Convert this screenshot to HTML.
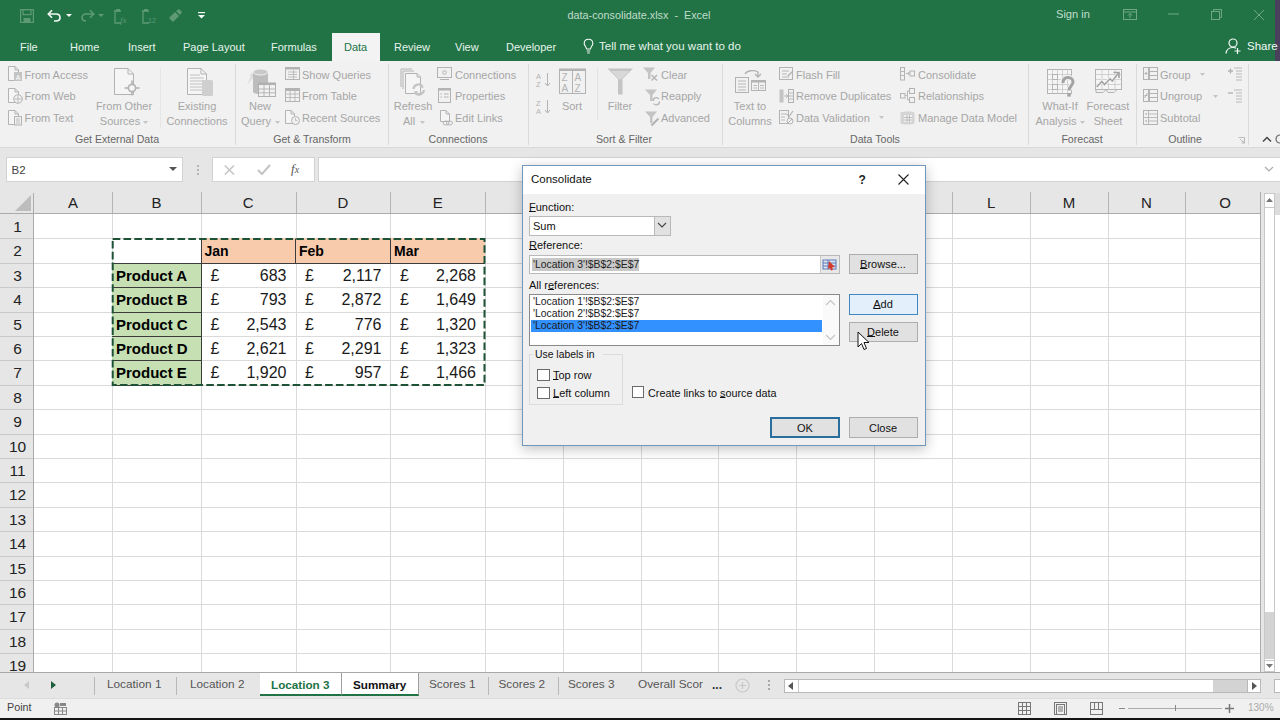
<!DOCTYPE html><html><head><meta charset="utf-8"><style>
html,body{margin:0;padding:0;}
body{width:1280px;height:720px;overflow:hidden;position:relative;background:#fff;font-family:"Liberation Sans",sans-serif;}
.t{position:absolute;white-space:nowrap;line-height:1;}
.r{position:absolute;box-sizing:border-box;}
svg.r{overflow:visible;}
u{text-decoration:underline;text-underline-offset:0px;text-decoration-thickness:1px;}
</style></head><body>
<div class="r" style="left:0px;top:0px;width:1280px;height:61px;background:#217346"></div>
<div class="r" style="left:1275px;top:0px;width:5px;height:61px;background:#4a3f5c"></div>
<div class="r" style="left:332px;top:33px;width:48px;height:28px;background:#f3f3f3"></div>
<div class="t" style="top:41.79px;font-size:11px;color:#e6f4eb;left:20px;">File</div>
<div class="t" style="top:41.79px;font-size:11px;color:#e6f4eb;left:70px;">Home</div>
<div class="t" style="top:41.79px;font-size:11px;color:#e6f4eb;left:128px;">Insert</div>
<div class="t" style="top:41.79px;font-size:11px;color:#e6f4eb;left:183px;">Page Layout</div>
<div class="t" style="top:41.79px;font-size:11px;color:#e6f4eb;left:271px;">Formulas</div>
<div class="t" style="top:41.79px;font-size:11px;color:#217346;left:344px;">Data</div>
<div class="t" style="top:41.79px;font-size:11px;color:#e6f4eb;left:394px;">Review</div>
<div class="t" style="top:41.79px;font-size:11px;color:#e6f4eb;left:455px;">View</div>
<div class="t" style="top:41.79px;font-size:11px;color:#e6f4eb;left:506px;">Developer</div>
<div class="t" style="top:41.37px;font-size:11.5px;color:#e6f4eb;left:599px;">Tell me what you want to do</div>
<svg class="r" style="left:583px;top:38px;" width="11" height="17" viewBox="0 0 11 17"><path d="M5.5 1.2C3 1.2 1.2 3 1.2 5.4C1.2 7.6 3.3 8.6 3.6 11H7.4C7.7 8.6 9.8 7.6 9.8 5.4C9.8 3 8 1.2 5.5 1.2Z" fill="none" stroke="#f4f9f6" stroke-width="1.1"/><path d="M3.8 13H7.2M4.3 15H6.7" stroke="#f4f9f6" stroke-width="1.1"/></svg>
<div class="t" style="top:9.61px;font-size:10.8px;color:#c0ddca;left:489px;width:300px;text-align:center;">data-consolidate.xlsx&nbsp; -&nbsp; Excel</div>
<div class="t" style="top:9.35px;font-size:11.1px;color:#c0ddca;left:1056px;">Sign in</div>
<div class="t" style="top:40.87px;font-size:11.5px;color:#f4f9f6;left:1247px;">Share</div>
<svg class="r" style="left:1225px;top:38px;" width="17" height="16" viewBox="0 0 17 16"><circle cx="8" cy="5" r="4" fill="none" stroke="#f4f9f6" stroke-width="1.2"/><path d="M1 15.5C1.5 11.5 4 9.5 8 9.5C9.2 9.5 10.2 9.7 11 10.1" fill="none" stroke="#f4f9f6" stroke-width="1.2"/><path d="M12.5 10V16M9.5 13H15.5" stroke="#f4f9f6" stroke-width="1.2"/></svg>
<svg class="r" style="left:20px;top:9px;" width="14" height="14" viewBox="0 0 14 14"><rect x="0.6" y="0.6" width="12.8" height="12.8" fill="none" stroke="#5e9a76" stroke-width="1.2"/><rect x="3" y="0.6" width="8" height="5" fill="none" stroke="#5e9a76" stroke-width="1.2"/><rect x="3.5" y="9" width="7" height="4.4" fill="#5e9a76"/></svg>
<svg class="r" style="left:47px;top:9px;" width="15" height="13" viewBox="0 0 15 13"><path d="M1.5 5H9C11.5 5 13 6.5 13 8.5C13 10.5 11.5 12 9 12H7" fill="none" stroke="#f4f9f6" stroke-width="1.6"/><path d="M5 1.2L1.3 5L5 8.8" fill="none" stroke="#f4f9f6" stroke-width="1.6"/></svg>
<svg class="r" style="left:66px;top:14px;" width="6" height="3" viewBox="0 0 6 3"><path d="M0 0H6L3 3Z" fill="#f4f9f6"/></svg>
<svg class="r" style="left:80px;top:9px;" width="15" height="13" viewBox="0 0 15 13"><path d="M13.5 5H6C3.5 5 2 6.5 2 8.5C2 10.5 3.5 12 6 12" fill="none" stroke="#5e9a76" stroke-width="1.6"/><path d="M10 1.2L13.7 5L10 8.8" fill="none" stroke="#5e9a76" stroke-width="1.6"/></svg>
<svg class="r" style="left:98px;top:14px;" width="6" height="3" viewBox="0 0 6 3"><path d="M0 0H6L3 3Z" fill="#5e9a76"/></svg>
<svg class="r" style="left:112px;top:8px;" width="16" height="16" viewBox="0 0 16 16"><path d="M2 3H9M3 3V15H9" fill="none" stroke="#5e9a76" stroke-width="1.3"/><rect x="4" y="1" width="4" height="2.5" fill="#5e9a76"/><text x="8" y="15" font-size="9" font-style="italic" fill="#5e9a76" font-family="Liberation Serif">fx</text></svg>
<svg class="r" style="left:140px;top:8px;" width="16" height="16" viewBox="0 0 16 16"><path d="M2 3H9M3 3V15H9" fill="none" stroke="#5e9a76" stroke-width="1.3"/><rect x="4" y="1" width="4" height="2.5" fill="#5e9a76"/><text x="8" y="15" font-size="7" fill="#5e9a76" font-family="Liberation Sans">12</text></svg>
<svg class="r" style="left:167px;top:9px;" width="16" height="14" viewBox="0 0 16 14"><path d="M2 9L8 3L12 7L6 13Z" fill="#5e9a76"/><path d="M9 2L13 6L15 3L12 0Z" fill="#5e9a76"/></svg>
<svg class="r" style="left:198px;top:12px;" width="7" height="7" viewBox="0 0 7 7"><path d="M0 0.6H7" stroke="#f4f9f6" stroke-width="1.2"/><path d="M0 3H7L3.5 6.5Z" fill="#f4f9f6"/></svg>
<svg class="r" style="left:1123px;top:9px;" width="14" height="11" viewBox="0 0 14 11"><rect x="0.5" y="0.5" width="13" height="10" fill="none" stroke="#6fa886"/><path d="M0.5 3H13.5M7 9V4.5M5 6.5L7 4.5L9 6.5" fill="none" stroke="#6fa886"/></svg>
<svg class="r" style="left:1168px;top:13px;" width="11" height="2" viewBox="0 0 11 2"><path d="M0 1H11" stroke="#6fa886" stroke-width="1"/></svg>
<svg class="r" style="left:1211px;top:9px;" width="11" height="11" viewBox="0 0 11 11"><rect x="0.5" y="2.5" width="8" height="8" fill="none" stroke="#6fa886"/><path d="M2.5 2.5V0.5H10.5V8.5H8.5" fill="none" stroke="#6fa886"/></svg>
<svg class="r" style="left:1254px;top:10px;" width="10" height="10" viewBox="0 0 10 10"><path d="M0 0L10 10M10 0L0 10" stroke="#6fa886" stroke-width="1"/></svg>
<div class="r" style="left:0px;top:61px;width:1280px;height:87px;background:#f1f1f1;border-bottom:1px solid #d9d9d9"></div>
<div class="t" style="top:134.03px;font-size:10.6px;color:#666666;left:-33px;width:300px;text-align:center;">Get External Data</div>
<div class="t" style="top:134.03px;font-size:10.6px;color:#666666;left:162px;width:300px;text-align:center;">Get &amp; Transform</div>
<div class="t" style="top:134.03px;font-size:10.6px;color:#666666;left:308px;width:300px;text-align:center;">Connections</div>
<div class="t" style="top:134.03px;font-size:10.6px;color:#666666;left:474px;width:300px;text-align:center;">Sort &amp; Filter</div>
<div class="t" style="top:134.03px;font-size:10.6px;color:#666666;left:725px;width:300px;text-align:center;">Data Tools</div>
<div class="t" style="top:134.03px;font-size:10.6px;color:#666666;left:932px;width:300px;text-align:center;">Forecast</div>
<div class="t" style="top:134.03px;font-size:10.6px;color:#666666;left:1035px;width:300px;text-align:center;">Outline</div>
<div class="r" style="left:235px;top:64px;width:1px;height:81px;background:#dadada"></div>
<div class="r" style="left:388px;top:64px;width:1px;height:81px;background:#dadada"></div>
<div class="r" style="left:528px;top:64px;width:1px;height:81px;background:#dadada"></div>
<div class="r" style="left:722px;top:64px;width:1px;height:81px;background:#dadada"></div>
<div class="r" style="left:1028px;top:64px;width:1px;height:81px;background:#dadada"></div>
<div class="r" style="left:1136px;top:64px;width:1px;height:81px;background:#dadada"></div>
<div class="r" style="left:1248px;top:64px;width:1px;height:81px;background:#dadada"></div>
<div class="r" style="left:160px;top:68px;width:1px;height:60px;background:#e6e6e6"></div>
<div class="r" style="left:597px;top:68px;width:1px;height:52px;background:#e2e2e2"></div>
<div class="t" style="top:69.99px;font-size:11px;color:#a6a6a6;left:24.5px;">From Access</div>
<div class="t" style="top:91.29px;font-size:11px;color:#a6a6a6;left:24.5px;">From Web</div>
<div class="t" style="top:112.89px;font-size:11px;color:#a6a6a6;left:24.5px;">From Text</div>
<div class="t" style="top:69.99px;font-size:11px;color:#a6a6a6;left:302px;">Show Queries</div>
<div class="t" style="top:91.29px;font-size:11px;color:#a6a6a6;left:302px;">From Table</div>
<div class="t" style="top:112.89px;font-size:11px;color:#a6a6a6;left:302px;">Recent Sources</div>
<div class="t" style="top:69.99px;font-size:11px;color:#a6a6a6;left:455px;">Connections</div>
<div class="t" style="top:91.29px;font-size:11px;color:#a6a6a6;left:455px;">Properties</div>
<div class="t" style="top:112.89px;font-size:11px;color:#a6a6a6;left:455px;">Edit Links</div>
<div class="t" style="top:69.99px;font-size:11px;color:#a6a6a6;left:661px;">Clear</div>
<div class="t" style="top:91.29px;font-size:11px;color:#a6a6a6;left:661px;">Reapply</div>
<div class="t" style="top:112.89px;font-size:11px;color:#a6a6a6;left:661px;">Advanced</div>
<div class="t" style="top:69.99px;font-size:11px;color:#a6a6a6;left:796px;">Flash Fill</div>
<div class="t" style="top:91.29px;font-size:11px;color:#a6a6a6;left:796px;">Remove Duplicates</div>
<div class="t" style="top:112.89px;font-size:11px;color:#a6a6a6;left:796px;">Data Validation</div>
<div class="t" style="top:69.99px;font-size:11px;color:#a6a6a6;left:918px;">Consolidate</div>
<div class="t" style="top:91.29px;font-size:11px;color:#a6a6a6;left:918px;">Relationships</div>
<div class="t" style="top:112.89px;font-size:11px;color:#a6a6a6;left:918px;">Manage Data Model</div>
<div class="t" style="top:69.99px;font-size:11px;color:#a6a6a6;left:1160px;">Group</div>
<div class="t" style="top:91.29px;font-size:11px;color:#a6a6a6;left:1160px;">Ungroup</div>
<div class="t" style="top:112.89px;font-size:11px;color:#a6a6a6;left:1160px;">Subtotal</div>
<svg class="r" style="left:879px;top:116px;" width="6" height="3" viewBox="0 0 6 3"><path d="M0 0H5L2.5 3Z" fill="#c4c4c4"/></svg>
<svg class="r" style="left:1200px;top:73px;" width="6" height="3" viewBox="0 0 6 3"><path d="M0 0H5L2.5 3Z" fill="#c4c4c4"/></svg>
<svg class="r" style="left:1213px;top:95px;" width="6" height="3" viewBox="0 0 6 3"><path d="M0 0H5L2.5 3Z" fill="#c4c4c4"/></svg>
<div class="t" style="top:101.09px;font-size:11px;color:#a6a6a6;left:-26px;width:300px;text-align:center;">From Other</div>
<div class="t" style="top:116.09px;font-size:11px;color:#a6a6a6;left:-30px;width:300px;text-align:center;">Sources</div>
<div class="t" style="top:101.09px;font-size:11px;color:#a6a6a6;left:47px;width:300px;text-align:center;">Existing</div>
<div class="t" style="top:116.09px;font-size:11px;color:#a6a6a6;left:47px;width:300px;text-align:center;">Connections</div>
<div class="t" style="top:101.09px;font-size:11px;color:#a6a6a6;left:110px;width:300px;text-align:center;">New</div>
<div class="t" style="top:116.09px;font-size:11px;color:#a6a6a6;left:106px;width:300px;text-align:center;">Query</div>
<div class="t" style="top:101.09px;font-size:11px;color:#a6a6a6;left:263px;width:300px;text-align:center;">Refresh</div>
<div class="t" style="top:116.09px;font-size:11px;color:#a6a6a6;left:259px;width:300px;text-align:center;">All</div>
<div class="t" style="top:101.09px;font-size:11px;color:#a6a6a6;left:422px;width:300px;text-align:center;">Sort</div>
<div class="t" style="top:101.09px;font-size:11px;color:#a6a6a6;left:470px;width:300px;text-align:center;">Filter</div>
<div class="t" style="top:101.09px;font-size:11px;color:#a6a6a6;left:600px;width:300px;text-align:center;">Text to</div>
<div class="t" style="top:116.09px;font-size:11px;color:#a6a6a6;left:600px;width:300px;text-align:center;">Columns</div>
<div class="t" style="top:101.09px;font-size:11px;color:#a6a6a6;left:910px;width:300px;text-align:center;">What-If</div>
<div class="t" style="top:116.09px;font-size:11px;color:#a6a6a6;left:906px;width:300px;text-align:center;">Analysis</div>
<div class="t" style="top:101.09px;font-size:11px;color:#a6a6a6;left:958px;width:300px;text-align:center;">Forecast</div>
<div class="t" style="top:116.09px;font-size:11px;color:#a6a6a6;left:958px;width:300px;text-align:center;">Sheet</div>
<svg class="r" style="left:143px;top:121px;" width="6" height="3" viewBox="0 0 6 3"><path d="M0 0H5L2.5 3Z" fill="#c4c4c4"/></svg>
<svg class="r" style="left:275px;top:121px;" width="6" height="3" viewBox="0 0 6 3"><path d="M0 0H5L2.5 3Z" fill="#c4c4c4"/></svg>
<svg class="r" style="left:420px;top:121px;" width="6" height="3" viewBox="0 0 6 3"><path d="M0 0H5L2.5 3Z" fill="#c4c4c4"/></svg>
<svg class="r" style="left:1080px;top:121px;" width="6" height="3" viewBox="0 0 6 3"><path d="M0 0H5L2.5 3Z" fill="#c4c4c4"/></svg>
<svg class="r" style="left:8px;top:66px;" width="15" height="16" viewBox="0 0 15 16"><path d="M0.5 0.5H7L10.5 4V14.5H0.5Z" fill="#f5f5f5" stroke="#b3b3b3" stroke-width="1"/><path d="M7 0.5V4H10.5" fill="none" stroke="#b3b3b3" stroke-width="1"/><rect x="6" y="6" width="8" height="9" fill="#c4c4c4"/><text x="7.5" y="14" font-size="7" fill="#f1f1f1" font-family="Liberation Sans" font-weight="bold">A</text></svg>
<svg class="r" style="left:8px;top:88px;" width="15" height="16" viewBox="0 0 15 16"><path d="M0.5 0.5H7L10.5 4V14.5H0.5Z" fill="#f5f5f5" stroke="#b3b3b3" stroke-width="1"/><path d="M7 0.5V4H10.5" fill="none" stroke="#b3b3b3" stroke-width="1"/><circle cx="10" cy="11" r="4.3" fill="#f1f1f1" stroke="#b3b3b3"/><path d="M6 11H14M10 7V15" stroke="#b3b3b3" stroke-width="0.8"/></svg>
<svg class="r" style="left:8px;top:110px;" width="15" height="16" viewBox="0 0 15 16"><path d="M0.5 0.5H7L10.5 4V14.5H0.5Z" fill="#f5f5f5" stroke="#b3b3b3" stroke-width="1"/><path d="M7 0.5V4H10.5" fill="none" stroke="#b3b3b3" stroke-width="1"/><rect x="6.5" y="6.5" width="7" height="8.5" fill="#f1f1f1" stroke="#b3b3b3"/><path d="M8 9H12M8 11H12M8 13H12" stroke="#b3b3b3" stroke-width="0.8"/></svg>
<svg class="r" style="left:114px;top:68px;" width="27" height="28" viewBox="0 0 27 28"><path d="M0.5 0.5H14L19.5 6V26.5H0.5Z" fill="#f5f5f5" stroke="#b3b3b3" stroke-width="1"/><path d="M14 0.5V6H19.5" fill="none" stroke="#b3b3b3" stroke-width="1"/><circle cx="18" cy="20" r="3.6" fill="#f5f5f5" stroke="#b3b3b3" stroke-width="1.7"/><path d="M18 12.5V16M18 24V27.5M10.5 20H14M22 20H25.5" stroke="#b3b3b3" stroke-width="1.6"/></svg>
<svg class="r" style="left:187px;top:68px;" width="28" height="28" viewBox="0 0 28 28"><path d="M0.5 0.5H14L19.5 6V26.5H0.5Z" fill="#f5f5f5" stroke="#b3b3b3" stroke-width="1"/><path d="M14 0.5V6H19.5" fill="none" stroke="#b3b3b3" stroke-width="1"/><path d="M3 7H13M3 10H17M3 13H17M3 16H17M3 19H17M3 22H17" stroke="#b3b3b3" stroke-width="0.8"/><rect x="15" y="12" width="11" height="16" rx="1.5" fill="#cfcfcf"/></svg>
<svg class="r" style="left:245px;top:66px;" width="32" height="32" viewBox="0 0 32 32"><path d="M13 1L9 8L11 8L2 19L6 10L4 10Z" fill="#dcdcdc"/><rect x="8" y="6" width="15" height="20" fill="#bdbdbd"/><ellipse cx="15.5" cy="26" rx="7.5" ry="2" fill="#bdbdbd"/><ellipse cx="15.5" cy="6" rx="7.5" ry="3" fill="#c9c9c9" stroke="#f1f1f1" stroke-width="1"/><rect x="13.5" y="17" width="17" height="13.5" fill="#f1f1f1" stroke="#b0b0b0"/><rect x="13.5" y="17" width="17" height="2" fill="#b0b0b0"/><path d="M13.5 23H30.5M13.5 26.8H30.5M19 19V30.5M24.5 19V30.5" stroke="#b0b0b0" stroke-width="0.9"/></svg>
<svg class="r" style="left:285px;top:67px;" width="15" height="13" viewBox="0 0 15 13"><rect x="0.5" y="0.5" width="14" height="12" fill="none" stroke="#b3b3b3" stroke-width="1"/><rect x="0.5" y="0.5" width="14" height="2" fill="#b3b3b3"/><path d="M3 5H12M3 7.5H8M9 7.5H12M3 10H8M9 10H12M8.5 3V12" stroke="#b3b3b3" stroke-width="0.8"/></svg>
<svg class="r" style="left:285px;top:88px;" width="15" height="14" viewBox="0 0 15 14"><rect x="0.5" y="0.5" width="14" height="13" fill="none" stroke="#b3b3b3" stroke-width="1"/><rect x="0.5" y="0.5" width="14" height="2.5" fill="#b3b3b3"/><path d="M0.5 6H14.5M0.5 9.5H14.5M5 3V13.5M10 3V13.5" stroke="#b3b3b3" stroke-width="0.8"/></svg>
<svg class="r" style="left:285px;top:110px;" width="15" height="16" viewBox="0 0 15 16"><path d="M0.5 0.5H6L9.5 4V13.5H0.5Z" fill="#f5f5f5" stroke="#b3b3b3" stroke-width="1"/><path d="M6 0.5V4H9.5" fill="none" stroke="#b3b3b3" stroke-width="1"/><circle cx="10.5" cy="10.5" r="4" fill="#f1f1f1" stroke="#b3b3b3"/><path d="M10.5 8V10.5H12.5" stroke="#b3b3b3" stroke-width="0.8" fill="none"/></svg>
<svg class="r" style="left:400px;top:68px;" width="30" height="30" viewBox="0 0 30 30"><path d="M1 19V1H12" fill="none" stroke="#b3b3b3" stroke-width="1"/><path d="M3 21V3H14" fill="none" stroke="#b3b3b3" stroke-width="1"/><g transform="translate(5,5)"><path d="M0.5 0.5H12L15.5 4V20.5H0.5Z" fill="#f5f5f5" stroke="#b3b3b3" stroke-width="1"/><path d="M12 0.5V4H15.5" fill="none" stroke="#b3b3b3" stroke-width="1"/></g><path d="M13.5 21A5 5 0 0 1 22.5 18.5M24 22A5 5 0 0 1 15 24.5" fill="none" stroke="#c4c4c4" stroke-width="2.2"/><path d="M21 16L24 19.5L19.5 20Z M16.5 27L13.5 23.5L18 23Z" fill="#c4c4c4"/></svg>
<svg class="r" style="left:437px;top:67px;" width="15" height="13" viewBox="0 0 15 13"><rect x="0.5" y="0.5" width="14" height="10" fill="none" stroke="#b3b3b3" stroke-width="1"/><path d="M3 12.5H12" stroke="#b3b3b3"/><circle cx="7.5" cy="5.5" r="1.8" fill="none" stroke="#b3b3b3" stroke-width="1"/></svg>
<svg class="r" style="left:438px;top:88px;" width="13" height="15" viewBox="0 0 13 15"><rect x="0.5" y="0.5" width="12" height="14" fill="none" stroke="#b3b3b3" stroke-width="1"/><rect x="0.5" y="0.5" width="12" height="2" fill="#b3b3b3"/><path d="M2.5 6H4M6 6H10.5M2.5 9H4M6 9H10.5" stroke="#b3b3b3"/></svg>
<svg class="r" style="left:440px;top:110px;" width="13" height="16" viewBox="0 0 13 16"><path d="M0.5 0.5H6L9.5 4V11.5H0.5Z" fill="#f5f5f5" stroke="#b3b3b3" stroke-width="1"/><path d="M6 0.5V4H9.5" fill="none" stroke="#b3b3b3" stroke-width="1"/><ellipse cx="6" cy="13" rx="3" ry="2" fill="none" stroke="#b3b3b3" stroke-width="1" stroke-width="1.2"/><ellipse cx="9.5" cy="13" rx="3" ry="2" fill="none" stroke="#b3b3b3" stroke-width="1" stroke-width="1.2"/></svg>
<svg class="r" style="left:536px;top:72px;" width="16" height="16" viewBox="0 0 16 16"><text x="0" y="7" font-size="7.5" fill="#b3b3b3" font-family="Liberation Sans">A</text><text x="0" y="15" font-size="7.5" fill="#b3b3b3" font-family="Liberation Sans">Z</text><path d="M11.5 1V14M9 11L11.5 14L14 11" fill="none" stroke="#b3b3b3" stroke-width="1" stroke-width="1.2"/></svg>
<svg class="r" style="left:536px;top:99px;" width="16" height="16" viewBox="0 0 16 16"><text x="0" y="7" font-size="7.5" fill="#b3b3b3" font-family="Liberation Sans">Z</text><text x="0" y="15" font-size="7.5" fill="#b3b3b3" font-family="Liberation Sans">A</text><path d="M11.5 1V14M9 11L11.5 14L14 11" fill="none" stroke="#b3b3b3" stroke-width="1" stroke-width="1.2"/></svg>
<svg class="r" style="left:559px;top:68px;" width="28" height="26" viewBox="0 0 28 26"><rect x="0.5" y="2.5" width="13" height="23" fill="none" stroke="#b3b3b3" stroke-width="1"/><rect x="13.5" y="2.5" width="13" height="23" fill="none" stroke="#b3b3b3" stroke-width="1"/><rect x="0" y="0.5" width="27" height="2.5" fill="#b3b3b3"/><text x="2.5" y="13" font-size="10" fill="#b3b3b3" font-family="Liberation Sans">Z</text><text x="2.5" y="24" font-size="10" fill="#b3b3b3" font-family="Liberation Sans">A</text><text x="15.5" y="13" font-size="10" fill="#b3b3b3" font-family="Liberation Sans">A</text><text x="15.5" y="24" font-size="10" fill="#b3b3b3" font-family="Liberation Sans">Z</text></svg>
<svg class="r" style="left:607px;top:68px;" width="27" height="27" viewBox="0 0 27 27"><path d="M0.5 0.5H26L15.5 11V26.5H11V11Z" fill="#c4c4c4"/><path d="M4 3H22.5L14 11.5H12.5Z" fill="#d8d8d8"/></svg>
<svg class="r" style="left:643px;top:67px;" width="16" height="15" viewBox="0 0 16 15"><path d="M0 0.5H12L7.5 6V12H5V6Z" fill="#c4c4c4"/><path d="M8.5 8L14 13.5M14 8L8.5 13.5" stroke="#b3b3b3" stroke-width="1.4"/></svg>
<svg class="r" style="left:645px;top:89px;" width="16" height="16" viewBox="0 0 16 16"><path d="M0 0.5H12L7.5 6V12H5V6Z" fill="#c4c4c4"/><path d="M8 12A3.3 3.3 0 0 1 14 10M14.5 12.5A3.3 3.3 0 0 1 8.5 14.5" fill="none" stroke="#b3b3b3" stroke-width="1.3"/></svg>
<svg class="r" style="left:645px;top:111px;" width="16" height="16" viewBox="0 0 16 16"><path d="M0 0.5H12L7.5 6V12H5V6Z" fill="#c4c4c4"/><path d="M6.5 14.5L13.5 7.5" stroke="#b3b3b3" stroke-width="2.2"/></svg>
<svg class="r" style="left:735px;top:68px;" width="32" height="26" viewBox="0 0 32 26"><rect x="0.5" y="9.5" width="13" height="15" fill="#f1f1f1" stroke="#b3b3b3"/><path d="M3 13H11M3 16H11M3 19H11M3 22H11" stroke="#b3b3b3" stroke-width="0.9"/><rect x="16.5" y="12.5" width="14" height="10" fill="#f1f1f1" stroke="#b3b3b3"/><rect x="16.5" y="12.5" width="14" height="2" fill="#b3b3b3"/><path d="M23.5 14V22.5M18.5 17.5H22M25 17.5H29M18.5 20H22M25 20H29" stroke="#b3b3b3" stroke-width="0.9"/><path d="M10 6A8 5 0 0 1 23 4V8" fill="none" stroke="#b3b3b3" stroke-width="1.4"/><path d="M20 6L23 9L26 6" fill="none" stroke="#b3b3b3" stroke-width="1.4"/></svg>
<svg class="r" style="left:779px;top:67px;" width="15" height="14" viewBox="0 0 15 14"><rect x="0.5" y="0.5" width="13" height="12" fill="none" stroke="#b3b3b3" stroke-width="1"/><path d="M3 4H10M3 7H8M3 10H10" stroke="#b3b3b3" stroke-width="0.9"/><path d="M9 9L14 4" stroke="#b3b3b3" stroke-width="1.5"/></svg>
<svg class="r" style="left:779px;top:89px;" width="15" height="15" viewBox="0 0 15 15"><rect x="0.5" y="0.5" width="4" height="13" fill="#c4c4c4"/><rect x="9.5" y="0.5" width="5" height="13" fill="none" stroke="#b3b3b3" stroke-width="1"/><path d="M5 7H9M7 5L9 7L7 9M10 4H14M10 7H14M10 10H14" stroke="#b3b3b3" stroke-width="0.9" fill="none"/></svg>
<svg class="r" style="left:779px;top:110px;" width="15" height="15" viewBox="0 0 15 15"><rect x="0.5" y="0.5" width="9" height="13" fill="none" stroke="#b3b3b3" stroke-width="1"/><path d="M2 4H8M2 7H6M2 10H6" stroke="#b3b3b3" stroke-width="0.9"/><path d="M8 4L10 6.5L14 1" fill="none" stroke="#b3b3b3" stroke-width="1.2"/><circle cx="11" cy="11" r="3" fill="#f1f1f1" stroke="#b3b3b3"/><path d="M9 13L13 9" stroke="#b3b3b3"/></svg>
<svg class="r" style="left:900px;top:67px;" width="15" height="14" viewBox="0 0 15 14"><rect x="0.5" y="0.5" width="4" height="12.5" fill="none" stroke="#b3b3b3" stroke-width="1"/><path d="M0.5 4.5H4.5M0.5 8.5H4.5M6 6.5H9M8 5L9.5 6.5L8 8" stroke="#b3b3b3" fill="none" stroke-width="0.9"/><rect x="10" y="4" width="4.5" height="5" fill="none" stroke="#b3b3b3" stroke-width="1"/></svg>
<svg class="r" style="left:900px;top:88px;" width="15" height="15" viewBox="0 0 15 15"><rect x="0.5" y="5.5" width="4.5" height="4.5" fill="none" stroke="#b3b3b3" stroke-width="1"/><rect x="9.5" y="0.5" width="5" height="5" fill="none" stroke="#b3b3b3" stroke-width="1"/><rect x="9.5" y="9.5" width="5" height="5" fill="none" stroke="#b3b3b3" stroke-width="1"/><path d="M5 7.5H7.5V3H9.5M7.5 7.5V12H9.5" fill="none" stroke="#b3b3b3" stroke-width="0.9"/></svg>
<svg class="r" style="left:900px;top:110px;" width="15" height="15" viewBox="0 0 15 15"><path d="M0.5 3C0.5 1 14.5 1 14.5 3V13C14.5 15 0.5 15 0.5 13Z" fill="#d4d4d4"/><rect x="4" y="5" width="8" height="7" fill="#f1f1f1"/><path d="M4 7.5H12M4 10H12M7 5V12M9.5 5V12" stroke="#b3b3b3" stroke-width="0.8"/></svg>
<svg class="r" style="left:1047px;top:69px;" width="29" height="30" viewBox="0 0 29 30"><rect x="0.5" y="0.5" width="24" height="24" fill="#f5f5f5" stroke="#b3b3b3"/><path d="M0.5 5.5H24.5M0.5 10.5H24.5M0.5 15.5H24.5M0.5 20.5H24.5M5.5 0.5V24.5M10.5 0.5V24.5M15.5 0.5V24.5M20.5 0.5V24.5" stroke="#c8c8c8" stroke-width="0.8"/><rect x="5.5" y="5.5" width="5" height="5" fill="none" stroke="#b3b3b3"/><rect x="5.5" y="15.5" width="5" height="5" fill="none" stroke="#b3b3b3"/><path d="M16 14C16 10 18.5 8.5 21 8.5C24 8.5 26 10.5 26 13C26 16.5 22 17 22 21.5" fill="none" stroke="#f1f1f1" stroke-width="5"/><path d="M16 14C16 10 18.5 8.5 21 8.5C24 8.5 26 10.5 26 13C26 16.5 22 17 22 21.5" fill="none" stroke="#a3a3a3" stroke-width="3"/><rect x="20.3" y="24" width="3.4" height="3.6" fill="#a3a3a3"/></svg>
<svg class="r" style="left:1095px;top:69px;" width="28" height="28" viewBox="0 0 28 28"><rect x="0.5" y="0.5" width="26" height="20" fill="#f5f5f5" stroke="#b3b3b3"/><path d="M0.5 5.5H26.5M0.5 10.5H26.5M0.5 15.5H26.5M7 0.5V20.5M13.5 0.5V20.5M20 0.5V20.5" stroke="#c8c8c8" stroke-width="0.8"/><path d="M1.7 18L6.8 12.5L9.5 15.6L15 9.8L17.3 12.1L24 3.5" fill="none" stroke="#f5f5f5" stroke-width="3.2"/><path d="M1.7 18L6.8 12.5L9.5 15.6L15 9.8L17.3 12.1L24 3.5" fill="none" stroke="#a3a3a3" stroke-width="1.6"/><path d="M18.5 3.5H24V9" fill="none" stroke="#a3a3a3" stroke-width="1.6"/><path d="M1 20.5V23.5H8L11 20.5L13 23.5H19L22 20.5" fill="none" stroke="#b3b3b3"/></svg>
<svg class="r" style="left:1143px;top:67px;" width="16" height="14" viewBox="0 0 16 14"><rect x="0.5" y="0.5" width="5" height="12" fill="none" stroke="#b3b3b3" stroke-width="1"/><rect x="6.5" y="0.5" width="8" height="12" fill="none" stroke="#b3b3b3" stroke-width="1"/><path d="M6.5 4.5H14.5M6.5 8.5H14.5" stroke="#b3b3b3"/><path d="M1.5 6.5H4.5M3 5V8" stroke="#b3b3b3"/></svg>
<svg class="r" style="left:1143px;top:89px;" width="16" height="14" viewBox="0 0 16 14"><rect x="0.5" y="0.5" width="5" height="12" fill="none" stroke="#b3b3b3" stroke-width="1"/><rect x="6.5" y="0.5" width="8" height="12" fill="none" stroke="#b3b3b3" stroke-width="1"/><path d="M6.5 4.5H14.5M6.5 8.5H14.5" stroke="#b3b3b3"/><path d="M1.5 6.5H4.5M1.5 9L4.5 4" stroke="#b3b3b3"/></svg>
<svg class="r" style="left:1143px;top:110px;" width="16" height="16" viewBox="0 0 16 16"><rect x="0.5" y="0.5" width="14" height="14" fill="none" stroke="#b3b3b3" stroke-width="1"/><path d="M0.5 7.5H14.5M5.5 0.5V14.5M5.5 4H14.5M5.5 11H14.5M2.5 4H4M3.2 3V5M2.5 11H4M3.2 10V12" stroke="#b3b3b3" stroke-width="0.9"/></svg>
<svg class="r" style="left:1228px;top:67px;" width="15" height="14" viewBox="0 0 15 14"><path d="M0 4H5M2.5 1.5V6.5" stroke="#b3b3b3" stroke-width="1.4"/><path d="M6 1H14M8 4H14M8 7H14M8 10H14M8 13H14" stroke="#b3b3b3" stroke-width="0.9"/></svg>
<svg class="r" style="left:1228px;top:89px;" width="15" height="14" viewBox="0 0 15 14"><path d="M0 4H5" stroke="#b3b3b3" stroke-width="1.4"/><path d="M6 1H14M8 4H14M8 7H14M8 10H14M8 13H14" stroke="#b3b3b3" stroke-width="0.9"/></svg>
<svg class="r" style="left:1238px;top:137px;" width="7" height="7" viewBox="0 0 7 7"><path d="M0.5 0.5H6.5V6.5M2 2L6 6M3.5 6H6V3.5" fill="none" stroke="#b3b3b3" stroke-width="0.9"/></svg>
<svg class="r" style="left:1262px;top:136px;" width="10" height="6" viewBox="0 0 10 6"><path d="M1 5.5L5 1.5L9 5.5" fill="none" stroke="#444" stroke-width="1.5"/></svg>
<svg class="r" style="left:1275px;top:134px;" width="6" height="10" viewBox="0 0 6 10"><path d="M5 1A4 4 0 1 0 5 9" fill="none" stroke="#666" stroke-width="1.2"/></svg>
<div class="r" style="left:0px;top:148px;width:1280px;height:44px;background:#e6e6e6"></div>
<div class="r" style="left:6px;top:157px;width:177px;height:25px;background:#fff;border:1px solid #d2d2d2"></div>
<div class="t" style="top:165.27px;font-size:11.5px;color:#444;left:11.5px;">B2</div>
<svg class="r" style="left:169px;top:167px;" width="8" height="4" viewBox="0 0 8 4"><path d="M0 0H8L4 4Z" fill="#555"/></svg>
<div class="r" style="left:197px;top:164.5px;width:2px;height:2px;background:#b5b5b5"></div>
<div class="r" style="left:197px;top:168.5px;width:2px;height:2px;background:#b5b5b5"></div>
<div class="r" style="left:197px;top:172.5px;width:2px;height:2px;background:#b5b5b5"></div>
<div class="r" style="left:212px;top:157px;width:103px;height:25px;background:#fff;border:1px solid #d2d2d2"></div>
<svg class="r" style="left:224px;top:165px;" width="11" height="10" viewBox="0 0 11 10"><path d="M0.8 0.5L10 9.5M10 0.5L0.8 9.5" stroke="#c4c4c4" stroke-width="1.5"/></svg>
<svg class="r" style="left:257px;top:164px;" width="14" height="11" viewBox="0 0 14 11"><path d="M1 6L5 10L13 1" fill="none" stroke="#c4c4c4" stroke-width="2"/></svg>
<div class="t" style="top:162.00px;font-size:13px;color:#555;left:291px;font-family:'Liberation Serif',serif;font-style:italic;">f<span style="font-size:10px">x</span></div>
<div class="r" style="left:318px;top:157px;width:962px;height:25px;background:#fff;border:1px solid #d2d2d2;border-right:none"></div>
<svg class="r" style="left:1264px;top:166px;" width="10" height="6" viewBox="0 0 10 6"><path d="M1 1L5 5L9 1" fill="none" stroke="#aaa" stroke-width="1.2"/></svg>
<div class="r" style="left:0px;top:192px;width:1261px;height:22px;background:#e6e6e6"></div>
<div class="r" style="left:0px;top:214px;width:34px;height:458px;background:#e6e6e6"></div>
<svg class="r" style="left:0;top:0" width="1280" height="720"><line x1="112.5" y1="214" x2="112.5" y2="672" stroke="#dadada" stroke-width="1"/><line x1="112.5" y1="192" x2="112.5" y2="214" stroke="#b4b4b4" stroke-width="1"/><line x1="201.5" y1="214" x2="201.5" y2="672" stroke="#dadada" stroke-width="1"/><line x1="201.5" y1="192" x2="201.5" y2="214" stroke="#b4b4b4" stroke-width="1"/><line x1="296.5" y1="214" x2="296.5" y2="672" stroke="#dadada" stroke-width="1"/><line x1="296.5" y1="192" x2="296.5" y2="214" stroke="#b4b4b4" stroke-width="1"/><line x1="390.5" y1="214" x2="390.5" y2="672" stroke="#dadada" stroke-width="1"/><line x1="390.5" y1="192" x2="390.5" y2="214" stroke="#b4b4b4" stroke-width="1"/><line x1="485.5" y1="214" x2="485.5" y2="672" stroke="#dadada" stroke-width="1"/><line x1="485.5" y1="192" x2="485.5" y2="214" stroke="#b4b4b4" stroke-width="1"/><line x1="563.5" y1="214" x2="563.5" y2="672" stroke="#dadada" stroke-width="1"/><line x1="563.5" y1="192" x2="563.5" y2="214" stroke="#b4b4b4" stroke-width="1"/><line x1="641.5" y1="214" x2="641.5" y2="672" stroke="#dadada" stroke-width="1"/><line x1="641.5" y1="192" x2="641.5" y2="214" stroke="#b4b4b4" stroke-width="1"/><line x1="718.5" y1="214" x2="718.5" y2="672" stroke="#dadada" stroke-width="1"/><line x1="718.5" y1="192" x2="718.5" y2="214" stroke="#b4b4b4" stroke-width="1"/><line x1="796.5" y1="214" x2="796.5" y2="672" stroke="#dadada" stroke-width="1"/><line x1="796.5" y1="192" x2="796.5" y2="214" stroke="#b4b4b4" stroke-width="1"/><line x1="874.5" y1="214" x2="874.5" y2="672" stroke="#dadada" stroke-width="1"/><line x1="874.5" y1="192" x2="874.5" y2="214" stroke="#b4b4b4" stroke-width="1"/><line x1="952.5" y1="214" x2="952.5" y2="672" stroke="#dadada" stroke-width="1"/><line x1="952.5" y1="192" x2="952.5" y2="214" stroke="#b4b4b4" stroke-width="1"/><line x1="1030.5" y1="214" x2="1030.5" y2="672" stroke="#dadada" stroke-width="1"/><line x1="1030.5" y1="192" x2="1030.5" y2="214" stroke="#b4b4b4" stroke-width="1"/><line x1="1108.5" y1="214" x2="1108.5" y2="672" stroke="#dadada" stroke-width="1"/><line x1="1108.5" y1="192" x2="1108.5" y2="214" stroke="#b4b4b4" stroke-width="1"/><line x1="1185.5" y1="214" x2="1185.5" y2="672" stroke="#dadada" stroke-width="1"/><line x1="1185.5" y1="192" x2="1185.5" y2="214" stroke="#b4b4b4" stroke-width="1"/><line x1="34" y1="238.5" x2="1261" y2="238.5" stroke="#dadada" stroke-width="1"/><line x1="0" y1="238.5" x2="34" y2="238.5" stroke="#c9c9c9" stroke-width="1"/><line x1="34" y1="263.5" x2="1261" y2="263.5" stroke="#dadada" stroke-width="1"/><line x1="0" y1="263.5" x2="34" y2="263.5" stroke="#c9c9c9" stroke-width="1"/><line x1="34" y1="287.5" x2="1261" y2="287.5" stroke="#dadada" stroke-width="1"/><line x1="0" y1="287.5" x2="34" y2="287.5" stroke="#c9c9c9" stroke-width="1"/><line x1="34" y1="312.5" x2="1261" y2="312.5" stroke="#dadada" stroke-width="1"/><line x1="0" y1="312.5" x2="34" y2="312.5" stroke="#c9c9c9" stroke-width="1"/><line x1="34" y1="336.5" x2="1261" y2="336.5" stroke="#dadada" stroke-width="1"/><line x1="0" y1="336.5" x2="34" y2="336.5" stroke="#c9c9c9" stroke-width="1"/><line x1="34" y1="360.5" x2="1261" y2="360.5" stroke="#dadada" stroke-width="1"/><line x1="0" y1="360.5" x2="34" y2="360.5" stroke="#c9c9c9" stroke-width="1"/><line x1="34" y1="385.5" x2="1261" y2="385.5" stroke="#dadada" stroke-width="1"/><line x1="0" y1="385.5" x2="34" y2="385.5" stroke="#c9c9c9" stroke-width="1"/><line x1="34" y1="409.5" x2="1261" y2="409.5" stroke="#dadada" stroke-width="1"/><line x1="0" y1="409.5" x2="34" y2="409.5" stroke="#c9c9c9" stroke-width="1"/><line x1="34" y1="434.5" x2="1261" y2="434.5" stroke="#dadada" stroke-width="1"/><line x1="0" y1="434.5" x2="34" y2="434.5" stroke="#c9c9c9" stroke-width="1"/><line x1="34" y1="458.5" x2="1261" y2="458.5" stroke="#dadada" stroke-width="1"/><line x1="0" y1="458.5" x2="34" y2="458.5" stroke="#c9c9c9" stroke-width="1"/><line x1="34" y1="482.5" x2="1261" y2="482.5" stroke="#dadada" stroke-width="1"/><line x1="0" y1="482.5" x2="34" y2="482.5" stroke="#c9c9c9" stroke-width="1"/><line x1="34" y1="507.5" x2="1261" y2="507.5" stroke="#dadada" stroke-width="1"/><line x1="0" y1="507.5" x2="34" y2="507.5" stroke="#c9c9c9" stroke-width="1"/><line x1="34" y1="531.5" x2="1261" y2="531.5" stroke="#dadada" stroke-width="1"/><line x1="0" y1="531.5" x2="34" y2="531.5" stroke="#c9c9c9" stroke-width="1"/><line x1="34" y1="556.5" x2="1261" y2="556.5" stroke="#dadada" stroke-width="1"/><line x1="0" y1="556.5" x2="34" y2="556.5" stroke="#c9c9c9" stroke-width="1"/><line x1="34" y1="580.5" x2="1261" y2="580.5" stroke="#dadada" stroke-width="1"/><line x1="0" y1="580.5" x2="34" y2="580.5" stroke="#c9c9c9" stroke-width="1"/><line x1="34" y1="604.5" x2="1261" y2="604.5" stroke="#dadada" stroke-width="1"/><line x1="0" y1="604.5" x2="34" y2="604.5" stroke="#c9c9c9" stroke-width="1"/><line x1="34" y1="629.5" x2="1261" y2="629.5" stroke="#dadada" stroke-width="1"/><line x1="0" y1="629.5" x2="34" y2="629.5" stroke="#c9c9c9" stroke-width="1"/><line x1="34" y1="653.5" x2="1261" y2="653.5" stroke="#dadada" stroke-width="1"/><line x1="0" y1="653.5" x2="34" y2="653.5" stroke="#c9c9c9" stroke-width="1"/><line x1="34" y1="678.5" x2="1261" y2="678.5" stroke="#dadada" stroke-width="1"/><line x1="0" y1="678.5" x2="34" y2="678.5" stroke="#c9c9c9" stroke-width="1"/><line x1="0" y1="213.5" x2="1261" y2="213.5" stroke="#ababab" stroke-width="1"/><line x1="33.5" y1="193" x2="33.5" y2="672" stroke="#ababab" stroke-width="1"/><line x1="1260.5" y1="192" x2="1260.5" y2="672" stroke="#ababab" stroke-width="1"/><path d="M15 211H31V195Z" fill="#bdbdbd"/></svg>
<div class="t" style="top:195.30px;font-size:15px;color:#222;left:-77.0px;width:300px;text-align:center;">A</div>
<div class="t" style="top:195.30px;font-size:15px;color:#222;left:6.5px;width:300px;text-align:center;">B</div>
<div class="t" style="top:195.30px;font-size:15px;color:#222;left:98.25px;width:300px;text-align:center;">C</div>
<div class="t" style="top:195.30px;font-size:15px;color:#222;left:193.0px;width:300px;text-align:center;">D</div>
<div class="t" style="top:195.30px;font-size:15px;color:#222;left:287.75px;width:300px;text-align:center;">E</div>
<div class="t" style="top:195.30px;font-size:15px;color:#222;left:841.25px;width:300px;text-align:center;">L</div>
<div class="t" style="top:195.30px;font-size:15px;color:#222;left:919.0px;width:300px;text-align:center;">M</div>
<div class="t" style="top:195.30px;font-size:15px;color:#222;left:996.5px;width:300px;text-align:center;">N</div>
<div class="t" style="top:195.30px;font-size:15px;color:#222;left:1075.0px;width:300px;text-align:center;">O</div>
<div class="t" style="top:219.38px;font-size:15.5px;color:#222;left:-132.5px;width:300px;text-align:center;">1</div>
<div class="t" style="top:243.38px;font-size:15.5px;color:#222;left:-132.5px;width:300px;text-align:center;">2</div>
<div class="t" style="top:268.38px;font-size:15.5px;color:#222;left:-132.5px;width:300px;text-align:center;">3</div>
<div class="t" style="top:292.38px;font-size:15.5px;color:#222;left:-132.5px;width:300px;text-align:center;">4</div>
<div class="t" style="top:317.38px;font-size:15.5px;color:#222;left:-132.5px;width:300px;text-align:center;">5</div>
<div class="t" style="top:341.38px;font-size:15.5px;color:#222;left:-132.5px;width:300px;text-align:center;">6</div>
<div class="t" style="top:365.38px;font-size:15.5px;color:#222;left:-132.5px;width:300px;text-align:center;">7</div>
<div class="t" style="top:390.38px;font-size:15.5px;color:#222;left:-132.5px;width:300px;text-align:center;">8</div>
<div class="t" style="top:414.38px;font-size:15.5px;color:#222;left:-132.5px;width:300px;text-align:center;">9</div>
<div class="t" style="top:439.38px;font-size:15.5px;color:#222;left:-132.5px;width:300px;text-align:center;">10</div>
<div class="t" style="top:463.38px;font-size:15.5px;color:#222;left:-132.5px;width:300px;text-align:center;">11</div>
<div class="t" style="top:487.38px;font-size:15.5px;color:#222;left:-132.5px;width:300px;text-align:center;">12</div>
<div class="t" style="top:512.38px;font-size:15.5px;color:#222;left:-132.5px;width:300px;text-align:center;">13</div>
<div class="t" style="top:536.38px;font-size:15.5px;color:#222;left:-132.5px;width:300px;text-align:center;">14</div>
<div class="t" style="top:561.38px;font-size:15.5px;color:#222;left:-132.5px;width:300px;text-align:center;">15</div>
<div class="t" style="top:585.38px;font-size:15.5px;color:#222;left:-132.5px;width:300px;text-align:center;">16</div>
<div class="t" style="top:609.38px;font-size:15.5px;color:#222;left:-132.5px;width:300px;text-align:center;">17</div>
<div class="t" style="top:634.38px;font-size:15.5px;color:#222;left:-132.5px;width:300px;text-align:center;">18</div>
<div class="t" style="top:658.38px;font-size:15.5px;color:#222;left:-132.5px;width:300px;text-align:center;">19</div>
<div class="r" style="left:112px;top:263px;width:89px;height:24px;background:#c6e0b4"></div>
<div class="r" style="left:112px;top:287px;width:89px;height:25px;background:#c6e0b4"></div>
<div class="r" style="left:112px;top:312px;width:89px;height:24px;background:#c6e0b4"></div>
<div class="r" style="left:112px;top:336px;width:89px;height:24px;background:#c6e0b4"></div>
<div class="r" style="left:112px;top:360px;width:89px;height:25px;background:#c6e0b4"></div>
<div class="r" style="left:201px;top:238px;width:284px;height:25px;background:#f8cbad"></div>
<svg class="r" style="left:0;top:0" width="1280" height="720"><line x1="112" y1="263.5" x2="201" y2="263.5" stroke="#3c3c3c"/><line x1="112" y1="287.5" x2="201" y2="287.5" stroke="#3c3c3c"/><line x1="112" y1="312.5" x2="201" y2="312.5" stroke="#3c3c3c"/><line x1="112" y1="336.5" x2="201" y2="336.5" stroke="#3c3c3c"/><line x1="112" y1="360.5" x2="201" y2="360.5" stroke="#3c3c3c"/><line x1="112" y1="385.5" x2="201" y2="385.5" stroke="#3c3c3c"/><line x1="201" y1="263.5" x2="485" y2="263.5" stroke="#3c3c3c"/><line x1="201.5" y1="238.5" x2="201.5" y2="385" stroke="#3c3c3c"/><line x1="295.5" y1="238.5" x2="295.5" y2="263.5" stroke="#3c3c3c"/><line x1="390.5" y1="238.5" x2="390.5" y2="263.5" stroke="#3c3c3c"/><rect x="112.7" y="239" width="371.8" height="146" fill="none" stroke="#1d5236" stroke-width="2" stroke-dasharray="7.6 3.2"/></svg>
<div class="t" style="top:268.00px;font-size:15px;color:#000;font-weight:bold;left:116px;">Product A</div>
<div class="t" style="top:268.46px;font-size:16px;color:#1a1a1a;left:210.5px;">£</div>
<div class="t" style="top:268.46px;font-size:16px;color:#1a1a1a;left:-13.5px;width:300px;text-align:right;">683</div>
<div class="t" style="top:268.46px;font-size:16px;color:#1a1a1a;left:305.0px;">£</div>
<div class="t" style="top:268.46px;font-size:16px;color:#1a1a1a;left:81.5px;width:300px;text-align:right;">2,117</div>
<div class="t" style="top:268.46px;font-size:16px;color:#1a1a1a;left:400.0px;">£</div>
<div class="t" style="top:268.46px;font-size:16px;color:#1a1a1a;left:176px;width:300px;text-align:right;">2,268</div>
<div class="t" style="top:292.00px;font-size:15px;color:#000;font-weight:bold;left:116px;">Product B</div>
<div class="t" style="top:292.46px;font-size:16px;color:#1a1a1a;left:210.5px;">£</div>
<div class="t" style="top:292.46px;font-size:16px;color:#1a1a1a;left:-13.5px;width:300px;text-align:right;">793</div>
<div class="t" style="top:292.46px;font-size:16px;color:#1a1a1a;left:305.0px;">£</div>
<div class="t" style="top:292.46px;font-size:16px;color:#1a1a1a;left:81.5px;width:300px;text-align:right;">2,872</div>
<div class="t" style="top:292.46px;font-size:16px;color:#1a1a1a;left:400.0px;">£</div>
<div class="t" style="top:292.46px;font-size:16px;color:#1a1a1a;left:176px;width:300px;text-align:right;">1,649</div>
<div class="t" style="top:317.00px;font-size:15px;color:#000;font-weight:bold;left:116px;">Product C</div>
<div class="t" style="top:317.46px;font-size:16px;color:#1a1a1a;left:210.5px;">£</div>
<div class="t" style="top:317.46px;font-size:16px;color:#1a1a1a;left:-13.5px;width:300px;text-align:right;">2,543</div>
<div class="t" style="top:317.46px;font-size:16px;color:#1a1a1a;left:305.0px;">£</div>
<div class="t" style="top:317.46px;font-size:16px;color:#1a1a1a;left:81.5px;width:300px;text-align:right;">776</div>
<div class="t" style="top:317.46px;font-size:16px;color:#1a1a1a;left:400.0px;">£</div>
<div class="t" style="top:317.46px;font-size:16px;color:#1a1a1a;left:176px;width:300px;text-align:right;">1,320</div>
<div class="t" style="top:341.00px;font-size:15px;color:#000;font-weight:bold;left:116px;">Product D</div>
<div class="t" style="top:341.46px;font-size:16px;color:#1a1a1a;left:210.5px;">£</div>
<div class="t" style="top:341.46px;font-size:16px;color:#1a1a1a;left:-13.5px;width:300px;text-align:right;">2,621</div>
<div class="t" style="top:341.46px;font-size:16px;color:#1a1a1a;left:305.0px;">£</div>
<div class="t" style="top:341.46px;font-size:16px;color:#1a1a1a;left:81.5px;width:300px;text-align:right;">2,291</div>
<div class="t" style="top:341.46px;font-size:16px;color:#1a1a1a;left:400.0px;">£</div>
<div class="t" style="top:341.46px;font-size:16px;color:#1a1a1a;left:176px;width:300px;text-align:right;">1,323</div>
<div class="t" style="top:365.00px;font-size:15px;color:#000;font-weight:bold;left:116px;">Product E</div>
<div class="t" style="top:365.46px;font-size:16px;color:#1a1a1a;left:210.5px;">£</div>
<div class="t" style="top:365.46px;font-size:16px;color:#1a1a1a;left:-13.5px;width:300px;text-align:right;">1,920</div>
<div class="t" style="top:365.46px;font-size:16px;color:#1a1a1a;left:305.0px;">£</div>
<div class="t" style="top:365.46px;font-size:16px;color:#1a1a1a;left:81.5px;width:300px;text-align:right;">957</div>
<div class="t" style="top:365.46px;font-size:16px;color:#1a1a1a;left:400.0px;">£</div>
<div class="t" style="top:365.46px;font-size:16px;color:#1a1a1a;left:176px;width:300px;text-align:right;">1,466</div>
<div class="t" style="top:244.15px;font-size:14px;color:#000;font-weight:bold;left:204.5px;">Jan</div>
<div class="t" style="top:244.15px;font-size:14px;color:#000;font-weight:bold;left:299.0px;">Feb</div>
<div class="t" style="top:244.15px;font-size:14px;color:#000;font-weight:bold;left:394.0px;">Mar</div>
<div class="r" style="left:1261px;top:192px;width:19px;height:480px;background:#e6e6e6"></div>
<div class="r" style="left:1264px;top:193px;width:11px;height:479px;background:#fff;border:1px solid #c8c8c8"></div>
<div class="r" style="left:1264px;top:193px;width:11px;height:15px;background:#fff;border:1px solid #c8c8c8"></div>
<svg class="r" style="left:1266px;top:198px;" width="7" height="4" viewBox="0 0 7 4"><path d="M0 4H7L3.5 0Z" fill="#777"/></svg>
<div class="r" style="left:1265px;top:612px;width:9px;height:47px;background:#d3d3d3"></div>
<div class="r" style="left:1264px;top:660px;width:11px;height:12px;background:#fff;border:1px solid #c8c8c8"></div>
<svg class="r" style="left:1266px;top:664px;" width="7" height="4" viewBox="0 0 7 4"><path d="M0 0H7L3.5 4Z" fill="#777"/></svg>
<div class="r" style="left:1275px;top:193px;width:5px;height:22px;background:#dcdcdc"></div>
<div class="r" style="left:1275px;top:215px;width:5px;height:457px;background:#fff"></div>
<div class="r" style="left:0px;top:672px;width:1280px;height:26px;background:#e6e6e6;border-top:1px solid #a8a8a8"></div>
<svg class="r" style="left:24px;top:681px;" width="5" height="8" viewBox="0 0 5 8"><path d="M5 0V8L0 4Z" fill="#c8c8c8"/></svg>
<svg class="r" style="left:51px;top:681px;" width="5" height="8" viewBox="0 0 5 8"><path d="M0 0V8L5 4Z" fill="#1e5e3a"/></svg>
<div class="r" style="left:94px;top:677px;width:1px;height:18px;background:#b8b8b8"></div>
<div class="r" style="left:176px;top:677px;width:1px;height:18px;background:#b8b8b8"></div>
<div class="r" style="left:488px;top:677px;width:1px;height:18px;background:#b8b8b8"></div>
<div class="r" style="left:558px;top:677px;width:1px;height:18px;background:#b8b8b8"></div>
<div class="t" style="top:679.01px;font-size:11.8px;color:#555;left:107px;">Location 1</div>
<div class="t" style="top:679.01px;font-size:11.8px;color:#555;left:190px;">Location 2</div>
<div class="t" style="top:679.01px;font-size:11.8px;color:#555;left:429px;">Scores 1</div>
<div class="t" style="top:679.01px;font-size:11.8px;color:#555;left:498.5px;">Scores 2</div>
<div class="t" style="top:679.01px;font-size:11.8px;color:#555;left:568px;">Scores 3</div>
<div class="t" style="top:679.01px;font-size:11.8px;color:#555;left:638px;">Overall Scor</div>
<div class="r" style="left:260px;top:673px;width:82px;height:23px;background:#fff;border-bottom:2px solid #217346"></div>
<div class="t" style="top:679.10px;font-size:11.7px;color:#217346;font-weight:bold;left:271px;">Location 3</div>
<div class="r" style="left:341px;top:673px;width:78px;height:23px;background:#fff;border:1px solid #9e9e9e;border-top:none;border-bottom:2px solid #217346"></div>
<div class="t" style="top:679.10px;font-size:11.7px;color:#111;font-weight:bold;left:353px;">Summary</div>
<div class="t" style="top:678.84px;font-size:12px;color:#333;font-weight:bold;left:712px;">...</div>
<svg class="r" style="left:735px;top:678px;" width="15" height="15" viewBox="0 0 15 15"><circle cx="7.5" cy="7.5" r="6.5" fill="none" stroke="#c8c8c8" stroke-width="1.2"/><path d="M7.5 4V11M4 7.5H11" stroke="#c8c8c8" stroke-width="1.2"/></svg>
<div class="r" style="left:768px;top:680px;width:2px;height:2px;background:#a8a8a8"></div>
<div class="r" style="left:768px;top:684px;width:2px;height:2px;background:#a8a8a8"></div>
<div class="r" style="left:768px;top:688px;width:2px;height:2px;background:#a8a8a8"></div>
<div class="r" style="left:784px;top:679px;width:477px;height:14px;background:#fff;border:1px solid #b9b9b9"></div>
<div class="r" style="left:798px;top:680px;width:415px;height:12px;background:#fff;border-left:1px solid #c8c8c8"></div>
<div class="r" style="left:1213px;top:680px;width:34px;height:12px;background:#d3d3d3"></div>
<div class="r" style="left:1247px;top:679px;width:14px;height:14px;background:#fff;border:1px solid #b9b9b9"></div>
<svg class="r" style="left:788px;top:682px;" width="5" height="8" viewBox="0 0 5 8"><path d="M5 0V8L0 4Z" fill="#555"/></svg>
<svg class="r" style="left:1252px;top:682px;" width="5" height="8" viewBox="0 0 5 8"><path d="M0 0V8L5 4Z" fill="#555"/></svg>
<div class="r" style="left:1274px;top:679px;width:6px;height:14px;background:#fff;border:1px solid #b9b9b9;border-right:none"></div>
<div class="r" style="left:0px;top:698px;width:1280px;height:20px;background:#f0f0f0;border-top:1px solid #dcdcdc"></div>
<div class="t" style="top:702.36px;font-size:10.8px;color:#444;left:7px;">Point</div>
<svg class="r" style="left:54px;top:702px;" width="13" height="13" viewBox="0 0 13 13"><circle cx="3" cy="3" r="2.5" fill="#888"/><rect x="6" y="1" width="6" height="3" fill="#888"/><rect x="0.5" y="5.5" width="12" height="7" fill="none" stroke="#888"/><path d="M4.5 5.5V12.5M8.5 5.5V12.5M0.5 9H12.5" stroke="#888"/></svg>
<svg class="r" style="left:1018px;top:702px;" width="13" height="13" viewBox="0 0 13 13"><rect x="0.5" y="0.5" width="12" height="12" fill="none" stroke="#777"/><path d="M4.5 0.5V12.5M8.5 0.5V12.5M0.5 4.5H12.5M0.5 8.5H12.5" stroke="#777"/></svg>
<svg class="r" style="left:1054px;top:702px;" width="13" height="13" viewBox="0 0 13 13"><rect x="0.5" y="0.5" width="12" height="12" fill="none" stroke="#777"/><rect x="2.5" y="2.5" width="8" height="10" fill="none" stroke="#777"/><path d="M4 5H9M4 7H9M4 9H9" stroke="#777"/></svg>
<svg class="r" style="left:1090px;top:702px;" width="13" height="13" viewBox="0 0 13 13"><rect x="0.5" y="0.5" width="12" height="12" fill="none" stroke="#777"/><path d="M4.5 0.5V7.5M0.5 7.5H12.5M8.5 0.5V7.5" stroke="#777"/></svg>
<div class="r" style="left:1119px;top:708px;width:6px;height:1px;background:#888"></div>
<div class="r" style="left:1128px;top:708px;width:94px;height:1px;background:#aaa"></div>
<div class="r" style="left:1175px;top:705px;width:1px;height:6px;background:#888"></div>
<svg class="r" style="left:1225px;top:704px;" width="9" height="9" viewBox="0 0 9 9"><path d="M4.5 0V9M0 4.5H9" stroke="#777" stroke-width="1.5"/></svg>
<div class="t" style="top:703.03px;font-size:10px;color:#aaa;left:1248px;">130%</div>
<div class="r" style="left:0px;top:718px;width:1280px;height:2px;background:#141414"></div>
<div class="r" style="left:522px;top:165px;width:404px;height:281px;background:#f0f0f0;border:1px solid #6f98bf;box-shadow:0 3px 12px rgba(0,0,0,0.25)"></div>
<div class="r" style="left:523px;top:166px;width:402px;height:28px;background:#fff"></div>
<div class="t" style="top:173.97px;font-size:11.5px;color:#111;left:531px;">Consolidate</div>
<div class="t" style="top:173.84px;font-size:12px;color:#222;font-weight:bold;left:858.5px;">?</div>
<svg class="r" style="left:898px;top:174px;" width="11" height="11" viewBox="0 0 11 11"><path d="M0.5 0.5L10.5 10.5M10.5 0.5L0.5 10.5" stroke="#222" stroke-width="1.1"/></svg>
<div class="t" style="top:201.69px;font-size:11px;color:#111;left:529px;"><u>F</u>unction:</div>
<div class="r" style="left:529px;top:216px;width:142px;height:20px;background:#fff;border:1px solid #b9b9b9"></div>
<div class="r" style="left:654px;top:217px;width:16px;height:18px;background:#e1e1e1;border-left:1px solid #b9b9b9"></div>
<svg class="r" style="left:657px;top:222px;" width="10" height="7" viewBox="0 0 10 7"><path d="M1 1L5 5L9 1" stroke="#444" fill="none" stroke-width="1.1"/></svg>
<div class="t" style="top:221.19px;font-size:11px;color:#111;left:533px;">Sum</div>
<div class="t" style="top:240.19px;font-size:11px;color:#111;left:529px;"><u>R</u>eference:</div>
<div class="r" style="left:529px;top:255px;width:311px;height:19px;background:#fff;border:1px solid #b9b9b9"></div>
<div class="r" style="left:532px;top:258px;width:107px;height:13px;background:#c8c8c8"></div>
<div class="t" style="top:259.70px;font-size:10.4px;color:#222;left:533px;">'Location 3'!$B$2:$E$7</div>
<div class="r" style="left:820px;top:256px;width:19px;height:17px;background:#e8e8e8;border-left:1px solid #c8c8c8"></div>
<svg class="r" style="left:822px;top:258px;" width="15" height="13" viewBox="0 0 15 13"><rect x="1" y="2" width="13" height="9" fill="#dde4f2" stroke="#5a79b8" stroke-width="1"/><path d="M1 5H14M1 8H14M6 2V11" stroke="#5a79b8" stroke-width="1"/><path d="M7 3L13 9L10 9.5L11 12L9 12.5L8 10L6 11Z" fill="#d23a2a"/></svg>
<div class="r" style="left:849px;top:254px;width:69px;height:20px;background:#e1e1e1;border:1px solid #adadad"></div>
<div class="t" style="top:259.19px;font-size:11px;color:#111;left:733px;width:300px;text-align:center;"><u>B</u>rowse...</div>
<div class="t" style="top:279.69px;font-size:11px;color:#111;left:529px;">All r<u>e</u>ferences:</div>
<div class="r" style="left:529px;top:294px;width:311px;height:52px;background:#fff;border:1px solid #8a8a8a"></div>
<div class="r" style="left:823px;top:295px;width:16px;height:50px;background:#fafafa"></div>
<svg class="r" style="left:825px;top:299px;" width="11" height="7" viewBox="0 0 11 7"><path d="M1 6L5.5 1.5L10 6" stroke="#c4c4c4" fill="none" stroke-width="1.2"/></svg>
<svg class="r" style="left:825px;top:334px;" width="11" height="7" viewBox="0 0 11 7"><path d="M1 1L5.5 5.5L10 1" stroke="#c4c4c4" fill="none" stroke-width="1.2"/></svg>
<div class="r" style="left:531px;top:320px;width:291px;height:12px;background:#3391ff"></div>
<div class="t" style="top:296.70px;font-size:10.4px;color:#222;left:533px;">'Location 1'!$B$2:$E$7</div>
<div class="t" style="top:308.70px;font-size:10.4px;color:#222;left:533px;">'Location 2'!$B$2:$E$7</div>
<div class="t" style="top:320.70px;font-size:10.4px;color:#1a1a1a;left:533px;">'Location 3'!$B$2:$E$7</div>
<div class="r" style="left:849px;top:294px;width:69px;height:21px;background:#e3effa;border:1px solid #3f86c2"></div>
<div class="t" style="top:298.69px;font-size:11px;color:#111;left:733px;width:300px;text-align:center;"><u>A</u>dd</div>
<div class="r" style="left:849px;top:322px;width:69px;height:20px;background:#e1e1e1;border:1px solid #adadad"></div>
<div class="t" style="top:326.69px;font-size:11px;color:#111;left:733px;width:300px;text-align:center;"><u>D</u>elete</div>
<div class="r" style="left:529px;top:354px;width:94px;height:51px;border:1px solid #dcdcdc"></div>
<div class="r" style="left:533px;top:350px;width:70px;height:10px;background:#f0f0f0"></div>
<div class="t" style="top:350.20px;font-size:10.4px;color:#111;left:535px;">Use labels in</div>
<div class="r" style="left:537px;top:369px;width:13px;height:12px;background:#fff;border:1px solid #6a6a6a"></div>
<div class="t" style="top:369.69px;font-size:11px;color:#111;left:553px;"><u>T</u>op row</div>
<div class="r" style="left:537px;top:387px;width:13px;height:12px;background:#fff;border:1px solid #6a6a6a"></div>
<div class="t" style="top:387.69px;font-size:11px;color:#111;left:553px;"><u>L</u>eft column</div>
<div class="r" style="left:632px;top:386px;width:12px;height:12px;background:#fff;border:1px solid #6a6a6a"></div>
<div class="t" style="top:387.86px;font-size:10.8px;color:#111;left:648px;">Create links to <u>s</u>ource data</div>
<div class="r" style="left:770px;top:417px;width:70px;height:21px;background:#e1e1e1;border:2px solid #2a6e9e"></div>
<div class="t" style="top:422.69px;font-size:11px;color:#111;left:655px;width:300px;text-align:center;">OK</div>
<div class="r" style="left:849px;top:417px;width:69px;height:21px;background:#e1e1e1;border:1px solid #adadad"></div>
<div class="t" style="top:422.69px;font-size:11px;color:#111;left:733px;width:300px;text-align:center;">Close</div>
<svg class="r" style="left:857px;top:331px;" width="14" height="21" viewBox="0 0 14 21"><path d="M1 1V16L4.5 12.5L7 18.5L9.5 17.5L7 11.5H12Z" fill="#fff" stroke="#111" stroke-width="1"/></svg>
</body></html>
